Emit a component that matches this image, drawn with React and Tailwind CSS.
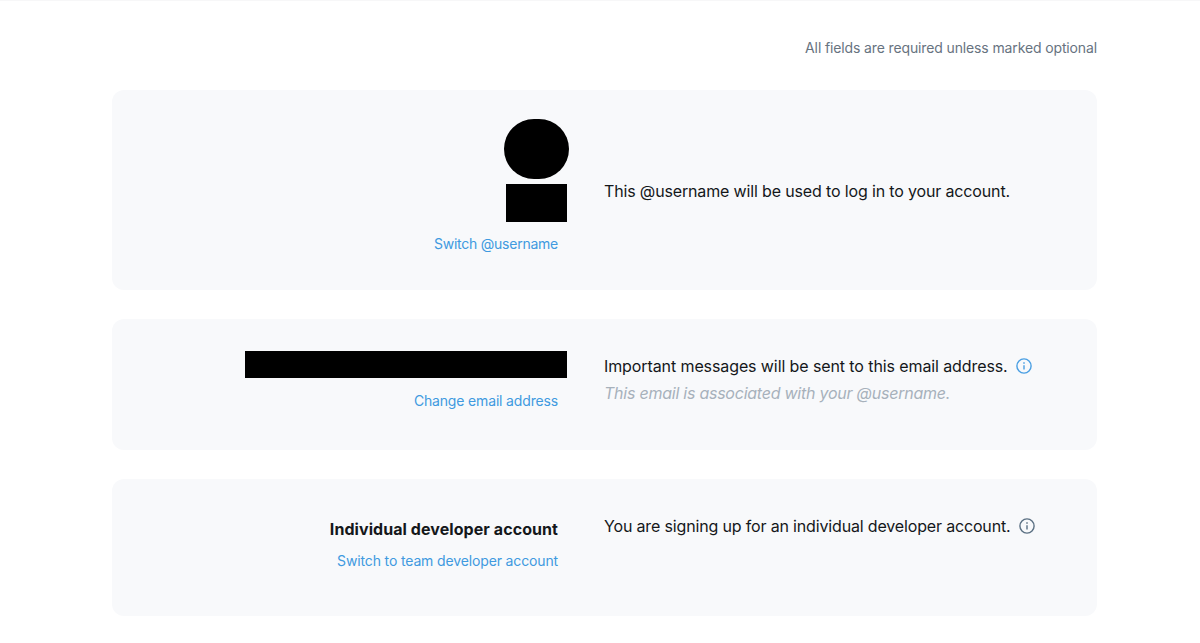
import React from 'react'

const InfoIcon = ({ color }) => (
  <svg width="16" height="16" viewBox="0 0 16 16" fill="none" stroke={color} className="shrink-0">
    <circle cx="8" cy="8" r="7.1" strokeWidth="1.4" />
    <path d="M8 7.2v4.2" strokeWidth="1.4" />
    <path d="M8 4.3v1.5" strokeWidth="1.5" />
  </svg>
)

const linkClass = 'text-[14px] leading-[20px] text-[#409ae0]'
const bodyClass = 'text-[16px] leading-[24px] text-[#14171a]'

export default function App() {
  return (
    <div className="min-h-[643px] overflow-hidden bg-white border-t border-[#f7f7f8] font-['Inter','Liberation_Sans',sans-serif]">
      <div className="ml-[112px] w-[985px]">
        <p className="pt-[37px] pb-[32px] text-right text-[14px] leading-[20px] tracking-[-0.13px] text-[#67737f]">
          All fields are required unless marked optional
        </p>

        <div className="flex flex-col gap-[29px]">
          {/* username */}
          <section className="flex h-[200px] rounded-[12px] bg-[#f8f9fb]">
            <div className="flex w-[457px] shrink-0 flex-col items-end pt-[29px]">
              <div className="flex flex-col items-center">
                <div className="h-[60px] w-[65px] rounded-full bg-black" />
                <div className="mt-[5px] h-[38px] w-[61px] bg-black" />
              </div>
              <a className={`${linkClass} mt-[12px] mr-[11px] tracking-[-0.24px]`}>Switch @username</a>
            </div>
            <div className="pl-[35px] pt-[89px]">
              <p className={`${bodyClass} tracking-[-0.15px]`}>This @username will be used to log in to your account.</p>
            </div>
          </section>

          {/* email */}
          <section className="flex h-[131px] rounded-[12px] bg-[#f8f9fb]">
            <div className="flex w-[457px] shrink-0 flex-col items-end pt-[32px]">
              <div className="mr-[2px] h-[27px] w-[322px] bg-black" />
              <a className={`${linkClass} mt-[13px] mr-[11px] tracking-[-0.16px]`}>Change email address</a>
            </div>
            <div className="pl-[35px] pt-[35px]">
              <div className="flex items-center gap-[8px]">
                <p className={`${bodyClass} tracking-[-0.1px]`}>Important messages will be sent to this email address.</p>
                <InfoIcon color="#4a9fe3" />
              </div>
              <p className="mt-[3px] text-[16px] italic leading-[24px] tracking-[-0.24px] text-[#a7b1bb]">
                This email is associated with your @username.
              </p>
            </div>
          </section>

          {/* account type */}
          <section className="flex h-[137px] rounded-[12px] bg-[#f8f9fb]">
            <div className="flex w-[457px] shrink-0 flex-col items-end pr-[11px] pt-[38px]">
              <h3 className="text-[16px] font-bold leading-[24px] tracking-[0.07px] text-[#14171a]">Individual developer account</h3>
              <a className={`${linkClass} mt-[10px] tracking-[-0.14px]`}>Switch to team developer account</a>
            </div>
            <div className="pl-[35px] pt-[35px]">
              <div className="flex items-center gap-[8px]">
                <p className={`${bodyClass} tracking-[-0.16px]`}>You are signing up for an individual developer account.</p>
                <InfoIcon color="#5b7083" />
              </div>
            </div>
          </section>
        </div>
      </div>
    </div>
  )
}
